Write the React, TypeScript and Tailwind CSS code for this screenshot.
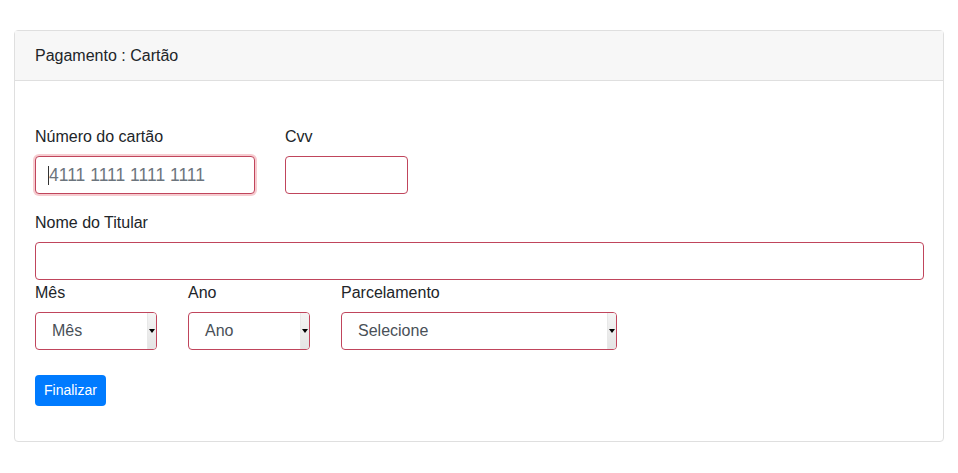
import React from "react";

const fieldBorder = "border border-[#c0455c] rounded-[4px] bg-white";

function FakeSelect({ label, value, width }: { label: string; value: string; width: string }) {
  return (
    <div className={width}>
      <label className="block h-6 leading-6 mb-[7px] text-[#212529]">{label}</label>
      <div className={`${fieldBorder} relative flex h-[38px] items-center pl-[16px] text-[#495057]`}>
        <span>{value}</span>
        <div className="absolute right-0 top-0 bottom-0 flex w-[9px] items-center justify-center rounded-r-[3px] bg-gradient-to-b from-[#f4f4f4] to-[#e4e4e4] border-l border-[#e8e8e8]">
          <div className="h-0 w-0 border-l-[3px] border-r-[3px] border-t-[4px] border-l-transparent border-r-transparent border-t-black" />
        </div>
      </div>
    </div>
  );
}

export default function App() {
  return (
    <div
      className="min-h-[473px] bg-white pt-[30px] px-[14px] text-[16px] text-[#212529]"
      style={{ fontFamily: '"Liberation Sans", Arial, sans-serif' }}
    >
      <div className="w-[930px] rounded-[4px] border border-[#dfdfdf]">
        <div className="h-[50px] border-b border-[#dfdfdf] bg-[#f7f7f7] px-5 leading-[49px]">
          Pagamento : Cartão
        </div>
        <div className="px-5 pt-[44px] pb-[35px]">
          <div className="flex gap-[30px]">
            <div className="w-[220px]">
              <label className="block h-6 leading-6 mb-[7px]">Número do cartão</label>
              <div className="flex h-[38px] items-center rounded-[4px] border border-[#c0455c] bg-white pl-[12px] text-[17.5px] text-[#6c757d] shadow-[0_0_0_2px_rgba(220,53,69,0.25)]">
                <span className="inline-block h-[19px] w-px bg-[#333]" />
                <span>4111 1111 1111 1111</span>
              </div>
            </div>
            <div className="w-[123px]">
              <label className="block h-6 leading-6 mb-[7px]">Cvv</label>
              <div className={`${fieldBorder} h-[38px]`} />
            </div>
          </div>

          <div className="mt-[17px]">
            <label className="block h-6 leading-6 mb-[7px]">Nome do Titular</label>
            <div className={`${fieldBorder} h-[38px] w-[889px]`} />
          </div>

          <div className="mt-px flex gap-[31px]">
            <FakeSelect label="Mês" value="Mês" width="w-[122px]" />
            <FakeSelect label="Ano" value="Ano" width="w-[122px]" />
            <FakeSelect label="Parcelamento" value="Selecione" width="w-[276px]" />
          </div>

          <button className="mt-[25px] h-[31px] rounded-[4px] bg-[#007bff] px-[9px] text-[14px] text-white">
            Finalizar
          </button>
        </div>
      </div>
    </div>
  );
}
